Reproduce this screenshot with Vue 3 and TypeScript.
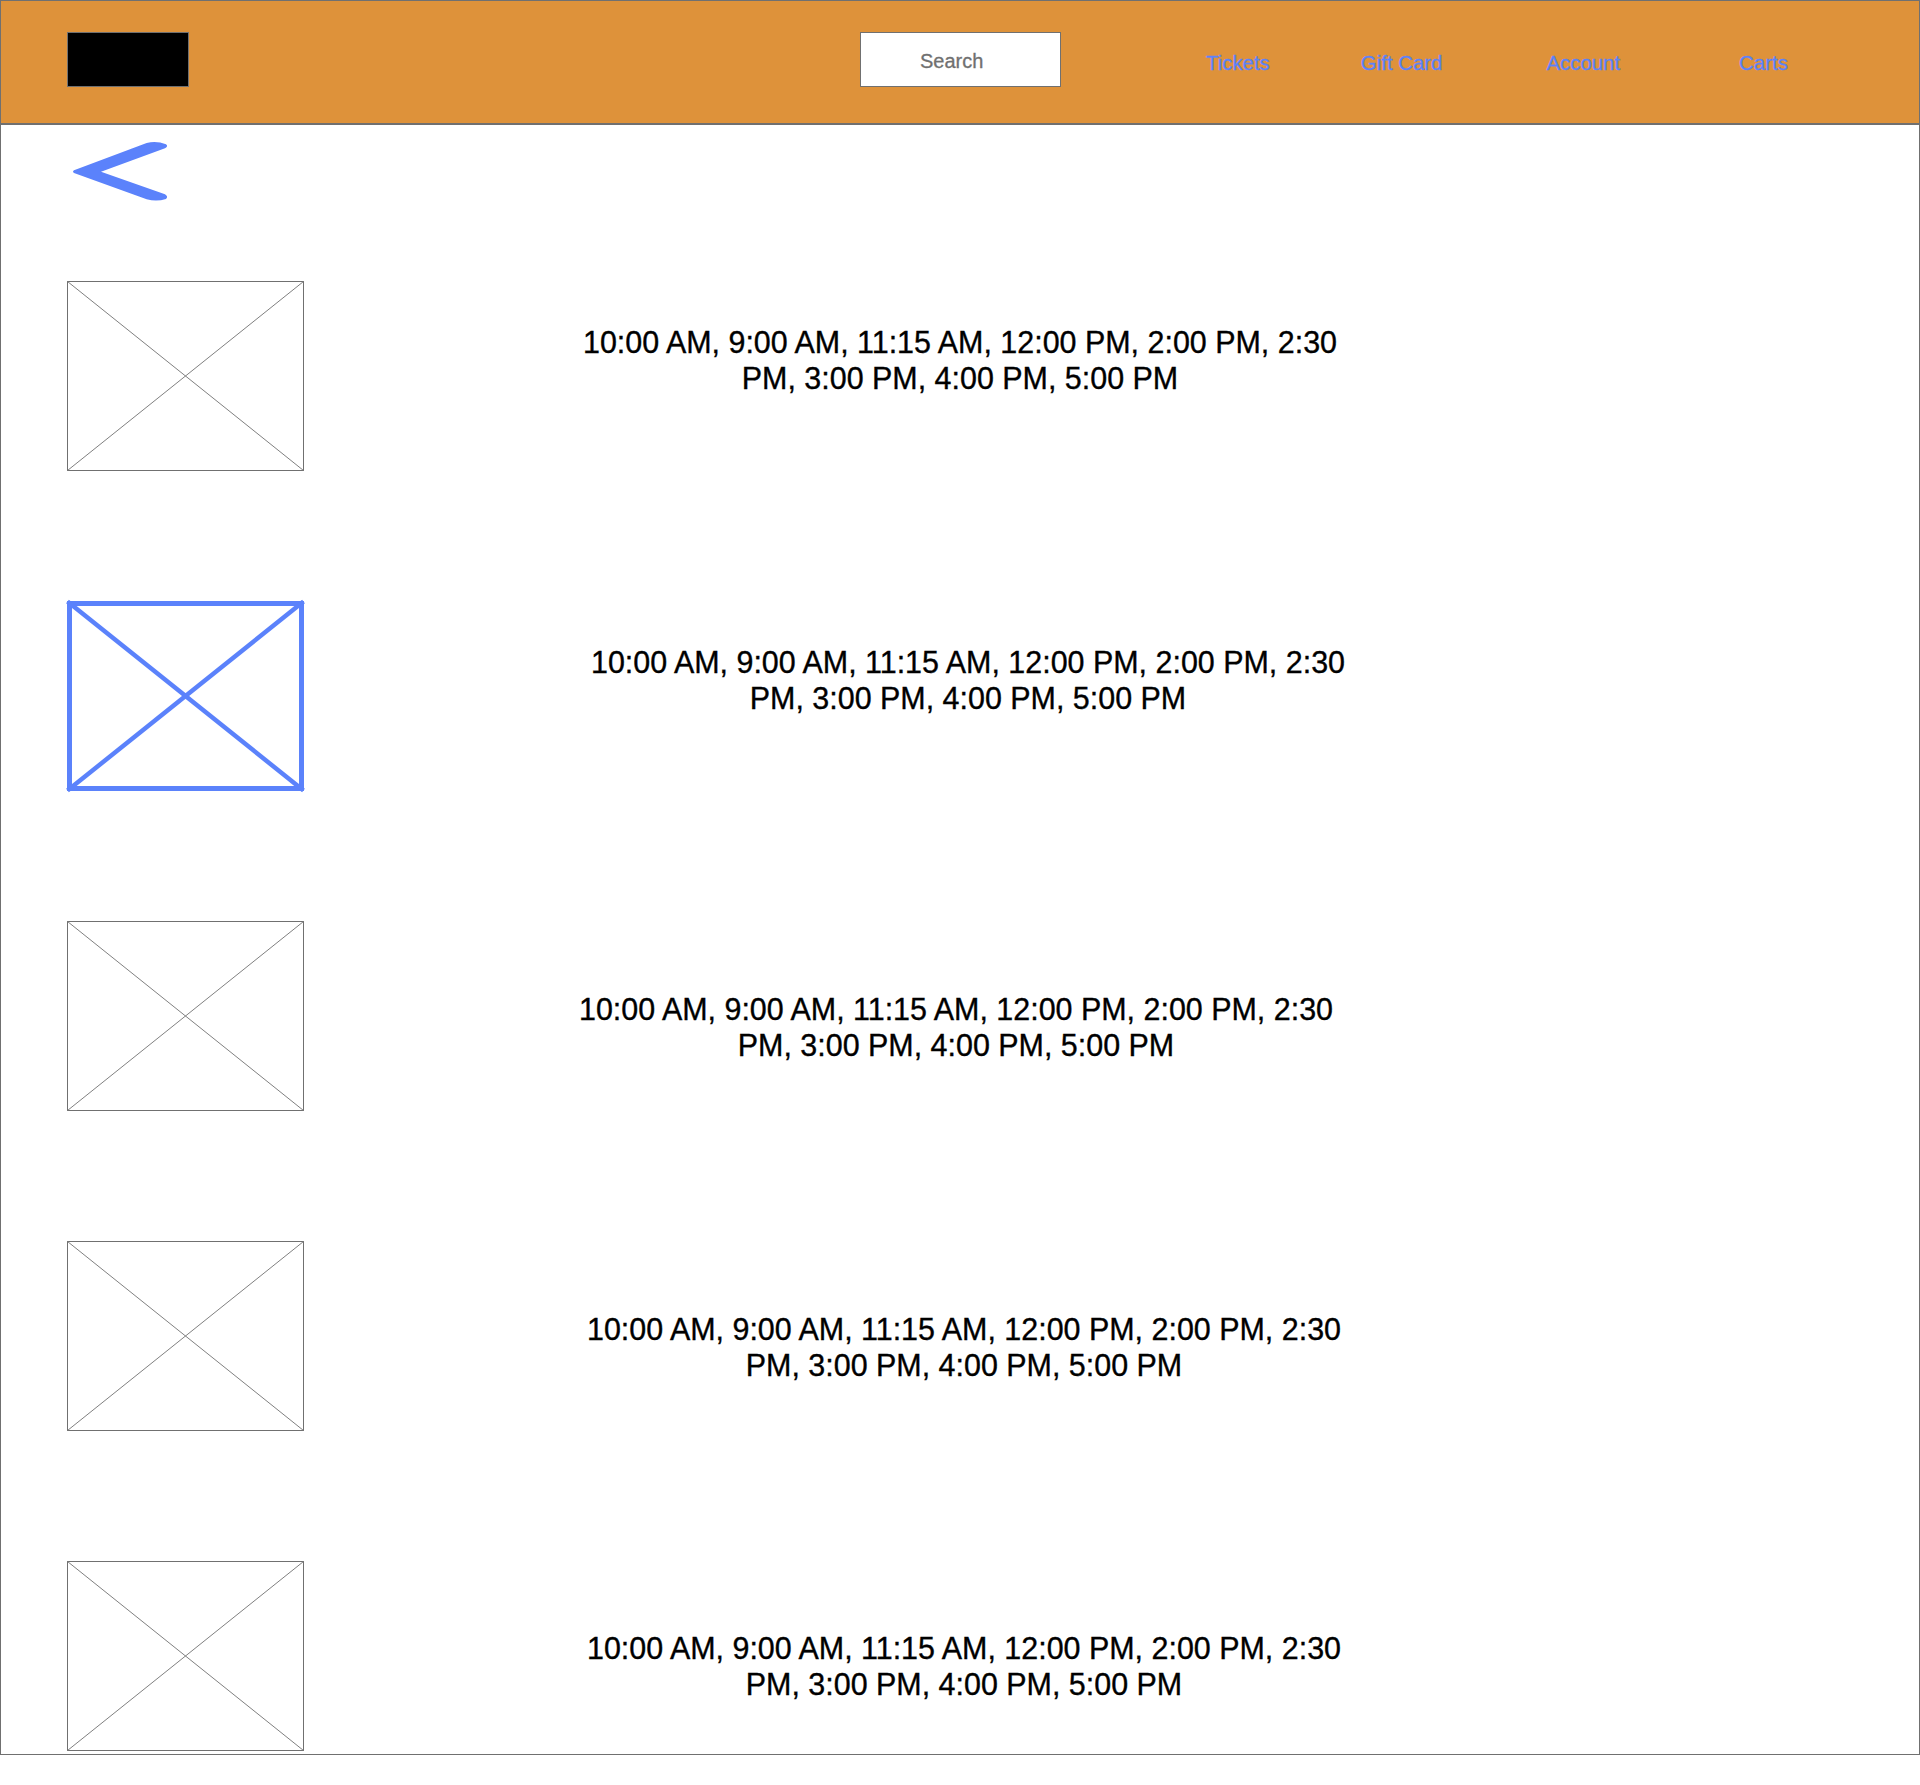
<script setup lang="ts">
const times = "10:00 AM, 9:00 AM, 11:15 AM, 12:00 PM, 2:00 PM, 2:30 PM, 3:00 PM, 4:00 PM, 5:00 PM";

const navLinks = [
  { label: "Tickets", gap: 0 },
  { label: "Gift Card", gap: 91 },
  { label: "Account", gap: 104 },
  { label: "Carts", gap: 119 },
];

// the rows are not quite aligned the same way in the design
const rows = [
  { left: 271, top: 43, active: false },
  { left: 279, top: 43, active: true },
  { left: 267, top: 70, active: false },
  { left: 275, top: 70, active: false },
  { left: 275, top: 69, active: false },
];
</script>

<template>
  <div class="frame">
    <header class="topbar">
      <div class="logo"></div>
      <div class="search">Search</div>
      <nav class="nav">
        <a v-for="link in navLinks" :key="link.label" class="nav-link" :style="{ marginLeft: link.gap + 'px' }">{{ link.label }}</a>
      </nav>
    </header>

    <svg class="back" viewBox="210 420 300 190" width="100" height="63.33">
      <path
        d="M222 511 L440 429 Q470 422 498 433 Q506 439 495 445 L303 515 L495 583 Q506 590 498 597 Q470 606 440 598 L222 519 Q216 515 222 511 Z"
        fill="#5b82fb"
      />
    </svg>

    <div class="list">
      <div v-for="(row, i) in rows" :key="i" class="row">
        <svg class="thumb" :class="{ active: row.active }" viewBox="0 0 237 190" width="237" height="190">
          <rect class="box" x="0.5" y="0.5" width="236" height="189" />
          <line class="cross" x1="0.5" y1="0.5" x2="236.5" y2="189.5" />
          <line class="cross" x1="236.5" y1="0.5" x2="0.5" y2="189.5" />
        </svg>
        <p class="times" :style="{ marginLeft: row.left + 'px', paddingTop: row.top + 'px' }">{{ times }}</p>
      </div>
    </div>
  </div>
</template>

<style>
html,
body {
  margin: 0;
  background: #fff;
}
</style>

<style scoped>
.frame {
  box-sizing: border-box;
  width: 1920px;
  height: 1755px;
  border: 1px solid #707070;
  overflow: hidden;
  font-family: "Liberation Sans", Arial, sans-serif;
}

.topbar {
  box-sizing: border-box;
  display: flex;
  align-items: flex-start;
  height: 124px;
  padding: 31px 0 0 66px;
  background: #de923a;
  border-bottom: 2px solid #707070;
}

.logo {
  box-sizing: border-box;
  width: 122px;
  height: 55px;
  background: #000;
  border: 1px solid #707070;
}

.search {
  box-sizing: border-box;
  width: 201px;
  height: 55px;
  margin-left: 671px;
  padding-left: 59px;
  background: #fff;
  border: 1px solid #707070;
  color: #707070;
  font-size: 20px;
  line-height: 56px;
  -webkit-text-stroke: 0.3px #707070;
}

.nav {
  display: flex;
  margin-left: 145px;
  padding-top: 19px;
}

.nav-link {
  color: #5b82fb;
  font-size: 20.4px;
  line-height: 24px;
  white-space: nowrap;
  -webkit-text-stroke: 0.3px #5b82fb;
}

.back {
  display: block;
  margin: 15px 0 0 69px;
}

.list {
  margin-top: 78px;
  padding-left: 66px;
}

.row {
  display: flex;
  align-items: flex-start;
  height: 320px;
}

.thumb {
  flex: none;
  overflow: visible;
}

.box {
  fill: #fff;
  stroke: #707070;
  stroke-width: 1;
}

.cross {
  stroke: #808080;
  stroke-width: 1;
}

.thumb.active .box {
  x: 2.5px;
  y: 2.5px;
  width: 232px;
  height: 185px;
  stroke: #5b82fb;
  stroke-width: 5;
}

.thumb.active .cross {
  stroke: #5b82fb;
  stroke-width: 4.5;
}

.times {
  width: 770px;
  margin: 0;
  color: #000;
  font-size: 30.45px;
  line-height: 36px;
  text-align: center;
  -webkit-text-stroke: 0.35px #000;
}
</style>
